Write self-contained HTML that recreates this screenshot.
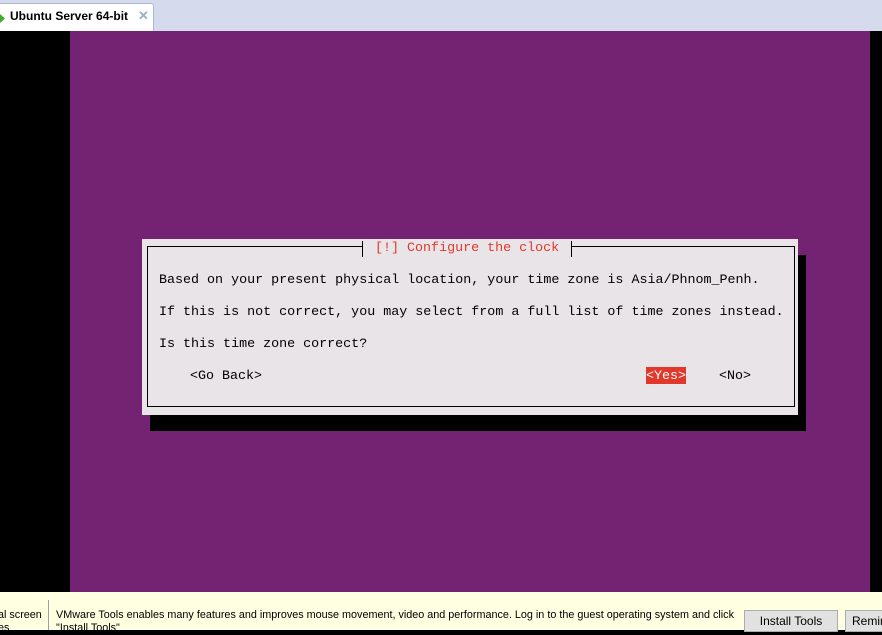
<!DOCTYPE html>
<html><head><meta charset="utf-8"><style>
*{margin:0;padding:0;box-sizing:border-box}
body{width:882px;height:630px;overflow:hidden;position:relative;background:#000;font-family:"Liberation Sans",sans-serif}
.abs{position:absolute}
.mono{font-family:"Liberation Mono","DejaVu Sans Mono",monospace;font-size:13.35px;white-space:pre;line-height:16px}
</style></head><body>
<div class="abs" style="left:0;top:0;width:882px;height:31px;background:#d5dbec"></div>
<div class="abs" style="left:-2px;top:3px;width:156px;height:28px;background:#fff;border:1px solid #a9b8d3;border-bottom:none;border-radius:0 3px 0 0"></div>
<div class="abs" style="left:0;top:14px;width:5px;height:9px;background:#3fae2a;clip-path:polygon(0 0,100% 50%,0 100%)"></div>
<div class="abs" style="left:10px;top:9px;font-size:12px;font-weight:bold;color:#000">Ubuntu Server 64-bit</div>
<div class="abs" style="left:138px;top:8px;font-size:13px;font-weight:bold;color:#9ab0c8">✕</div>
<div class="abs" style="left:0;top:31px;width:70px;height:561px;background:#000"></div>
<div class="abs" style="left:70px;top:31px;width:800px;height:561px;background:#732372"></div>
<div class="abs" style="left:150px;top:255px;width:656px;height:176px;background:#000"></div>
<div class="abs" style="left:142px;top:239px;width:656px;height:176px;background:#e8e4e7"></div>
<div class="abs" style="left:147px;top:246px;width:648px;height:161px;border:1.5px solid #000"></div>
<div class="abs mono" style="left:362px;top:241px;background:#e8e4e7;color:#e0392b;padding:0 4px;border-left:1.5px solid #000;border-right:1.5px solid #000"> [!] Configure the clock </div>
<div class="abs mono" style="left:159px;top:273px;color:#000">Based on your present physical location, your time zone is Asia/Phnom_Penh.</div>
<div class="abs mono" style="left:159px;top:305px;color:#000">If this is not correct, you may select from a full list of time zones instead.</div>
<div class="abs mono" style="left:159px;top:337px;color:#000">Is this time zone correct?</div>
<div class="abs mono" style="left:190px;top:369px;color:#000">&lt;Go Back&gt;</div>
<div class="abs mono" style="left:646px;top:367px;background:#e0392b;color:#fff;padding-top:2px;height:17px">&lt;Yes&gt;</div>
<div class="abs mono" style="left:719px;top:369px;color:#000">&lt;No&gt;</div>
<div class="abs" style="left:0;top:592px;width:882px;height:38px;background:#ffffe1"></div>
<div class="abs" style="left:48px;top:600px;width:1px;height:30px;background:#a0a0a0"></div>
<div class="abs" style="left:-2px;top:609px;font-size:10.8px;line-height:13px;color:#000">al screen<br>es</div>
<div class="abs" style="left:56px;top:609px;font-size:10.8px;line-height:13px;color:#000;white-space:nowrap">VMware Tools enables many features and improves mouse movement, video and performance. Log in to the guest operating system and click<br>"Install Tools"</div>
<div class="abs" style="left:744px;top:610px;width:94px;height:22px;background:#e1e1e1;border:1px solid #adadad;font-size:12px;text-align:center;line-height:20px">Install Tools</div>
<div class="abs" style="left:845px;top:610px;width:60px;height:22px;background:#e1e1e1;border:1px solid #adadad;font-size:12px;padding-left:6px;line-height:20px">Remind</div>
</body></html>
